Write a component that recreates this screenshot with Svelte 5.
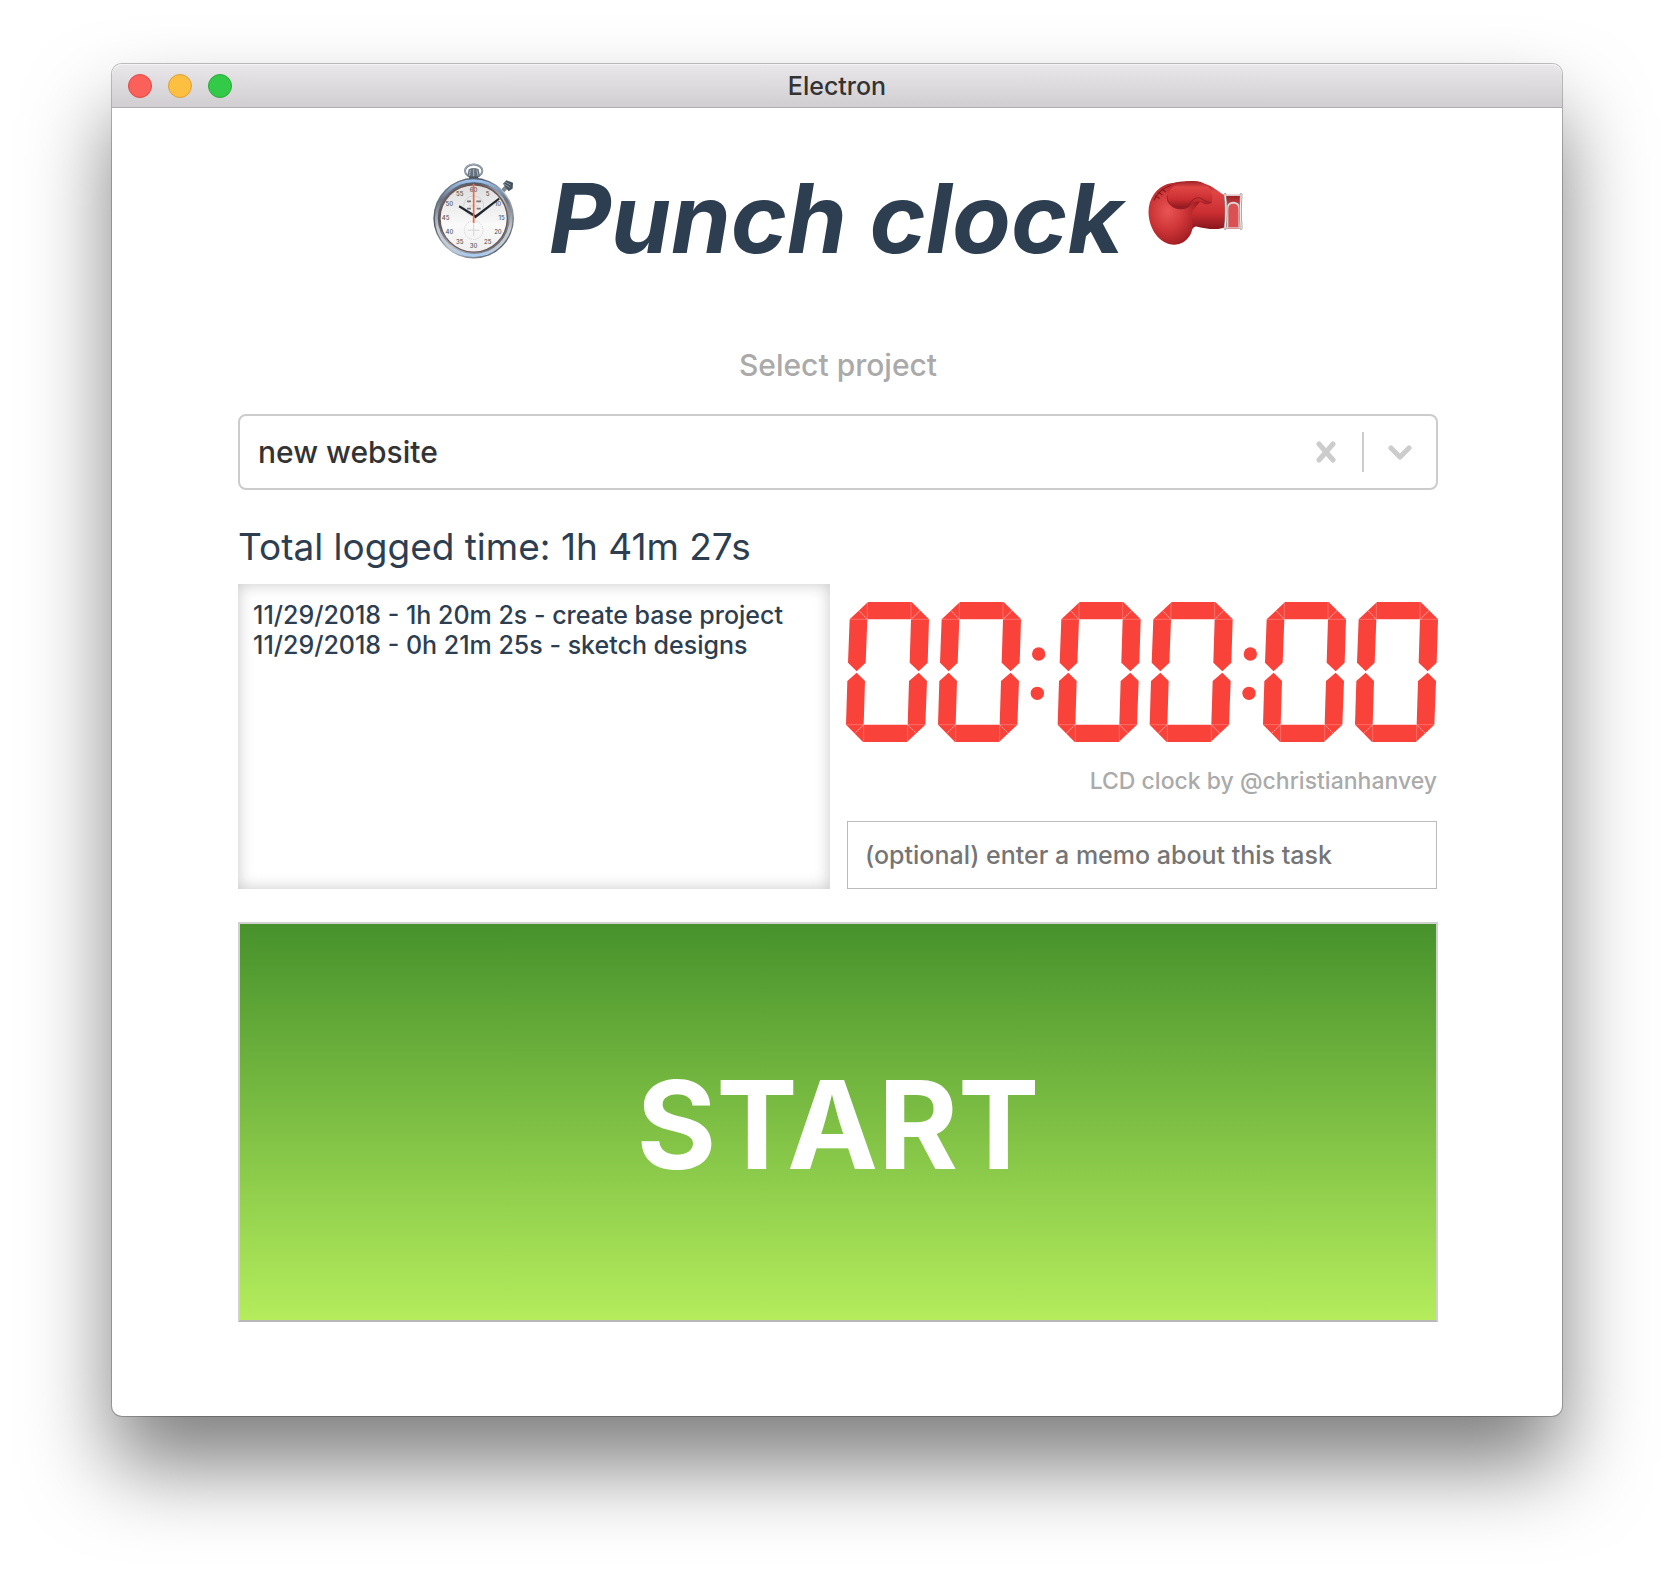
<script>
  let project = $state('new website');
  let memo = $state('');

  const lights = [
    { name: 'Close', kind: 'close' },
    { name: 'Minimize', kind: 'minimize' },
    { name: 'Zoom', kind: 'zoom' }
  ];

  const entries = [
    { date: '11/29/2018', time: '1h 20m 2s', memo: 'create base project' },
    { date: '11/29/2018', time: '0h 21m 25s', memo: 'sketch designs' }
  ];

  // Horizontal origins of the clock digits and colons, in viewBox units
  const digits = [0, 276, 635, 911, 1251, 1527];
  const colons = [576, 1211];

  // Positions of the printed numbers around the stopwatch dial
  const marks = Array.from({ length: 12 }, (_, i) => {
    const a = (i * Math.PI) / 6;
    return { label: i === 0 ? '60' : String(i * 5), x: 122 + 84 * Math.sin(a), y: 165 - 84 * Math.cos(a) };
  });
</script>

<div class="window">
  <header class="titlebar">
    <div class="lights">
      {#each lights as light}
        <button class="light {light.kind}" type="button" aria-label={light.name}></button>
      {/each}
    </div>
    <span class="title">Electron</span>
  </header>

  <main>
    <h1>
      <svg class="watch" viewBox="0 0 246 290" aria-hidden="true">
        <defs>
          <linearGradient id="rim" x1="0" y1="0" x2="1" y2="1">
            <stop offset="0" stop-color="#8d97a3" />
            <stop offset=".3" stop-color="#4d5663" />
            <stop offset=".55" stop-color="#b6bcc2" />
            <stop offset=".8" stop-color="#6e7681" />
            <stop offset="1" stop-color="#33383f" />
          </linearGradient>
          <linearGradient id="bevel" x1="0" y1="0" x2="0" y2="1">
            <stop offset="0" stop-color="#9cc0ee" />
            <stop offset=".25" stop-color="#6a727e" />
            <stop offset=".65" stop-color="#c9ccd0" />
            <stop offset=".9" stop-color="#c3cbd4" />
            <stop offset="1" stop-color="#a9cbf2" />
          </linearGradient>
          <linearGradient id="dial" x1="0" y1="0" x2="0" y2="1">
            <stop offset="0" stop-color="#dedede" />
            <stop offset=".6" stop-color="#fafafa" />
            <stop offset="1" stop-color="#efefef" />
          </linearGradient>
        </defs>
        <ellipse cx="122" cy="23" rx="26" ry="19" fill="none" stroke="#76818e" stroke-width="6" />
        <ellipse cx="122" cy="22" rx="26" ry="19" fill="none" stroke="#bcc6d0" stroke-width="2" />
        <path d="M107 18q15-7 30 0l4 22q-19 7-38 0z" fill="#66727e" />
        <path d="M112 20l-3 18M122 17v23M132 20l3 18" stroke="#a9b4be" stroke-width="3" />
        <path d="M108 40h28v10h-28z" fill="#4b535c" />
        <path d="M205 78l13-13 9 9-13 13z" fill="#7c8791" />
        <path d="M210 62l10-11 20 8-1 17-12 8z" fill="#46525e" />
        <path d="M216 56l16 9M213 62l17 11" stroke="#8c98a3" stroke-width="3" />
        <circle cx="122" cy="165" r="121" fill="url(#rim)" />
        <circle cx="122" cy="165" r="112" fill="none" stroke="url(#bevel)" stroke-width="9" />
        <circle cx="122" cy="165" r="103" fill="#6d5556" />
        <circle cx="122" cy="166" r="99" fill="url(#dial)" />
        <g fill="none" stroke="#c6c6c6" stroke-width="2">
          <circle cx="122" cy="128" r="30" />
          <circle cx="122" cy="201" r="28" stroke-dasharray="4 3" />
          <path d="M122 183v36M104 201h36M108 128h28" />
        </g>
        <path d="M102 112h12v5h-12zM130 112h14v5h-14zM102 134h12v5h-12zM131 134h12v5h-12z" fill="#777" />
        {#each marks as mark}
          <text x={mark.x} y={mark.y + 6} text-anchor="middle">{mark.label}</text>
        {/each}
        <path d="M125 162L77 132l3-6 49 30zM122 160l75-56 3 5-73 57z" fill="#20272e" />
        <path d="M122 62v118" stroke="#ef6a45" stroke-width="5" />
      </svg>
      <span>Punch clock</span>
      <svg class="glove" viewBox="0 0 284 196" aria-hidden="true">
        <defs>
          <radialGradient id="fist" cx=".36" cy=".45" r=".68">
            <stop offset="0" stop-color="#ea5554" />
            <stop offset=".45" stop-color="#cf3638" />
            <stop offset=".8" stop-color="#a82025" />
            <stop offset="1" stop-color="#741318" />
          </radialGradient>
          <linearGradient id="thumb" x1="0" y1="0" x2="0" y2="1">
            <stop offset="0" stop-color="#9c2126" />
            <stop offset=".22" stop-color="#e04646" />
            <stop offset=".65" stop-color="#cb2e32" />
            <stop offset="1" stop-color="#84161c" />
          </linearGradient>
          <linearGradient id="cuff" x1="0" y1="0" x2="0" y2="1">
            <stop offset="0" stop-color="#9a1b20" />
            <stop offset=".55" stop-color="#e8686a" />
            <stop offset="1" stop-color="#a51e23" />
          </linearGradient>
        </defs>
        <path d="M56 16C90 0 150-2 188 18c20 11 32 25 48 29l-2 92c-20 12-62 6-88-1-6 0-10 4-14 10z" fill="url(#thumb)" />
        <path d="M60 12C28 22 4 56 4 94c0 48 31 98 77 98 30 0 55-27 54-59-1-24-5-37 4-47l25-30C150 20 102 2 60 12z" fill="url(#fist)" />
        <path d="M62 52c2-36 36-48 74-49 38 0 60 22 58 54-2 16-18 20-34 10-13-8-22-1-31 9-16 18-68 16-67-24z" fill="url(#thumb)" />
        <path d="M60 46c-4 22 18 40 42 38 25-2 28-33 51-31 14 1 22 17 38 14" fill="none" stroke="#9a2126" stroke-width="3" />
        <path d="M20 60c12-24 28-37 50-44M24 47l13 8M33 35l12 10M44 26l11 10" fill="none" stroke="#7a1519" stroke-width="3" />
        <path d="M232 44h46v100h-46z" fill="url(#cuff)" />
        <path d="M238 143V86c0-25 36-25 36 0v57" fill="#db5053" stroke="#dcd6d4" stroke-width="6" />
        <path d="M231 43c4 30 4 70 0 101M279 43c-3 30-3 70 0 101" fill="none" stroke="#8e8582" stroke-width="8" stroke-linecap="round" />
        <path d="M231 43c4 30 4 70 0 101M279 43c-3 30-3 70 0 101" fill="none" stroke="#eee" stroke-width="4" stroke-linecap="round" />
        <path d="M232 46h46M232 142h46" stroke="#d9cccb" stroke-width="3" />
      </svg>
    </h1>

    <label class="prompt" for="project">Select project</label>
    <div class="picker">
      <select id="project" bind:value={project}>
        <option>new website</option>
      </select>
      <button class="clear" type="button" aria-label="Clear project">
        <svg viewBox="0 0 20 22"><path d="M3 3L17 19M17 3L3 19" /></svg>
      </button>
      <span class="divider"></span>
      <svg class="chevron" viewBox="0 0 24 16" aria-hidden="true"><path d="M3 4l9 9 9-9" /></svg>
    </div>

    <h2>Total logged time: 1h 41m 27s</h2>

    <div class="columns">
      <ul class="log">
        {#each entries as entry}
          <li>{entry.date} - {entry.time} - {entry.memo}</li>
        {/each}
      </ul>

      <section class="timer">
        <svg class="lcd" viewBox="18 66 1776 420" role="img" aria-label="00:00:00">
          {#each digits as x}
            <g transform="translate({x} 0)">
              <path d="M84 66H215L267 118L263 248L236 274L209 248L213 118H82L77 248L50 274L24 248L29 118Z" />
              <path d="M50 278L75 303L71 434H203L207 303L236 278L261 303L256 434L201 486H69L18 434L22 303Z" />
              <path class="seam" d="M57 92L82 118M240 92L213 118M44 460L71 434M229 460L203 434" />
              <path class="seam faint" d="M29 118H82V66M213 66V118H267M18 434H71V486M203 486V434H256" />
            </g>
          {/each}
          {#each colons as x}
            <circle cx={x + 20} cy="222" r="20" />
            <circle cx={x + 16} cy="340" r="20" />
          {/each}
        </svg>
        <p class="credit">LCD clock by @christianhanvey</p>
        <input
          type="text"
          aria-label="Memo"
          placeholder="(optional) enter a memo about this task"
          bind:value={memo}
        />
      </section>
    </div>

    <button class="start" type="button">START</button>
  </main>
</div>

<style>
  :global(body) {
    margin: 0;
    background: #fff;
    font-family: Inter, 'Liberation Sans', sans-serif;
    color: #2c3e50;
  }

  .window {
    margin: 64px 112px 160px;
    border-radius: 10px;
    background: #fff;
    box-shadow:
      0 0 0 1px rgba(0, 0, 0, 0.24),
      0 50px 84px rgba(0, 0, 0, 0.5);
  }

  .titlebar {
    display: grid;
    grid-template-columns: 1fr auto 1fr;
    align-items: center;
    height: 44px;
    box-sizing: border-box;
    padding: 0 16px;
    border-bottom: 1px solid #b0adb1;
    border-radius: 10px 10px 0 0;
    background: linear-gradient(#e9e7ea, #d1ced2);
    box-shadow: inset 0 1px #f5f4f5;
  }

  .lights {
    display: flex;
    gap: 16px;
  }

  .light {
    width: 24px;
    height: 24px;
    padding: 0;
    border: 1px solid;
    border-radius: 50%;
  }

  .close {
    background: #fc605b;
    border-color: #df4744;
  }

  .minimize {
    background: #fdbf40;
    border-color: #de9f34;
  }

  .zoom {
    background: #34ca49;
    border-color: #27aa35;
  }

  .title {
    color: #333;
    font-size: 25px;
    font-weight: 500;
    line-height: 30px;
  }

  main {
    display: flex;
    flex-direction: column;
    padding: 50px 124px 94px 126px;
  }

  h1 {
    display: flex;
    justify-content: center;
    align-items: flex-start;
    margin: 0;
    font-size: 96px;
    font-style: italic;
    font-weight: 700;
    line-height: 120px;
  }

  h1 span {
    margin: 0 24px 0 34px;
  }

  .watch {
    width: 82px;
    height: 97px;
    margin-top: 5px;
  }

  .watch text {
    fill: #555;
    font-size: 18px;
    font-style: normal;
    font-weight: 500;
  }

  .glove {
    width: 96px;
    height: 66px;
    margin-top: 22px;
  }

  .prompt {
    margin-top: 67px;
    color: #aaa;
    font-size: 30px;
    font-weight: 500;
    line-height: 40px;
    text-align: center;
  }

  .picker {
    display: flex;
    align-items: center;
    height: 76px;
    box-sizing: border-box;
    margin-top: 29px;
    padding-right: 24px;
    border: 2px solid #ccc;
    border-radius: 8px;
  }

  select {
    flex: 1;
    align-self: stretch;
    padding: 0 18px;
    border: 0;
    appearance: none;
    background: none;
    color: #333;
    font: 500 30px Inter, 'Liberation Sans', sans-serif;
  }

  .clear {
    display: flex;
    padding: 0 26px;
    border: 0;
    background: none;
  }

  .clear svg {
    width: 20px;
    height: 22px;
  }

  .picker path {
    fill: none;
    stroke: #ccc;
    stroke-width: 5;
    stroke-linecap: round;
    stroke-linejoin: round;
  }

  .divider {
    width: 2px;
    height: 40px;
    margin-right: 24px;
    background: #ccc;
  }

  .chevron {
    width: 24px;
    height: 16px;
  }

  h2 {
    margin: 34px 0 14px;
    font-size: 37px;
    font-weight: 400;
    line-height: 46px;
  }

  .columns {
    display: grid;
    grid-template-columns: 1fr 1fr;
    gap: 16px;
  }

  .log {
    margin: 0;
    padding: 16px 15px;
    box-shadow: inset 0 0 16px rgba(0, 0, 0, 0.22);
    font-size: 25px;
    font-weight: 500;
    line-height: 30px;
    list-style: none;
  }

  .timer {
    display: flex;
    flex-direction: column;
    padding-top: 18px;
  }

  .lcd {
    display: block;
    width: 100%;
    fill: #f9423a;
  }

  .seam {
    fill: none;
    stroke: #fff;
    stroke-opacity: 0.7;
    stroke-width: 2;
  }

  .faint {
    stroke-opacity: 0.35;
  }

  .credit {
    margin: 24px 1px;
    color: #aaa;
    font-size: 23px;
    font-weight: 500;
    line-height: 31px;
    text-align: right;
  }

  input {
    height: 68px;
    box-sizing: border-box;
    margin: 0 1px;
    padding: 0 17px;
    border: 1px solid #bbb;
    color: #2c3e50;
    font: 500 25px Inter, 'Liberation Sans', sans-serif;
  }

  input::placeholder {
    color: #757575;
    opacity: 1;
  }

  .start {
    min-height: 400px;
    margin-top: 33px;
    padding: 4px 0 0;
    border: 2px solid;
    border-color: #d0d0d0 #d0d0d0 #b8b8b8;
    background: linear-gradient(#47922c, #b4ec5c);
    color: #fff;
    font: 700 122px Inter, 'Liberation Sans', sans-serif;
  }
</style>
